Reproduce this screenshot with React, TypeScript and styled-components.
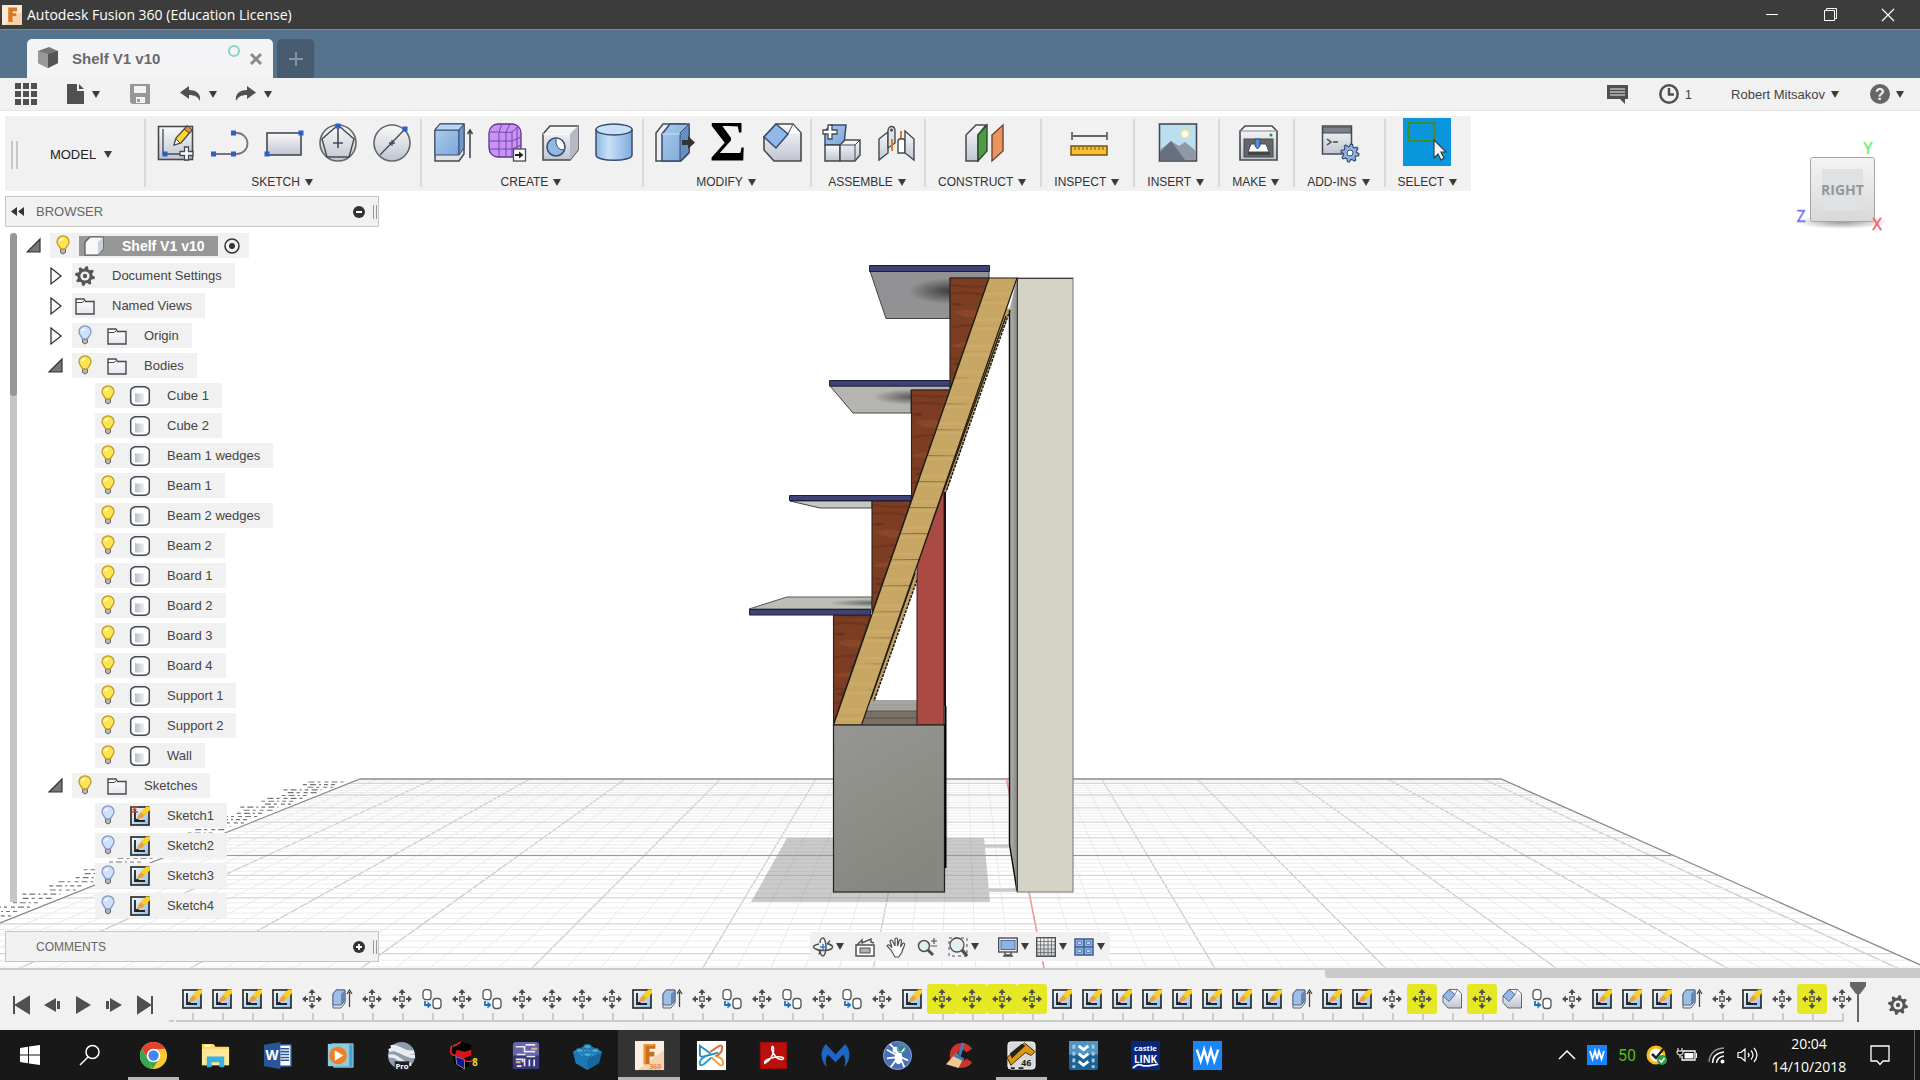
import React from 'react';
import styled, { createGlobalStyle, css } from 'styled-components';

const ui = `"Liberation Sans", Arial, sans-serif`;
const system = `"Open Sans", "Noto Sans", sans-serif`;

const Global = createGlobalStyle`
  * { box-sizing: border-box; }
  body { margin: 0; font-family: ${ui}; font-size: 13px; color: #444; background: #fff; }
  button { font: inherit; color: inherit; background: none; border: 0; padding: 0; margin: 0; display: flex; align-items: center; justify-content: center; cursor: pointer; }
  ul { list-style: none; margin: 0; padding: 0; }
  svg { display: block; flex: none; overflow: visible; }
`;

/* ---------- frame ---------- */

const Window = styled.div`
  display: flex;
  flex-direction: column;
  height: 100vh;
  overflow: hidden;
`;

const TitleBar = styled.header`
  display: flex;
  align-items: center;
  gap: 5px;
  height: 29px;
  padding: 0 3px 0 2px;
  background: #3c3c3c;
  color: #fff;
`;

const AppTitle = styled.h1`
  flex: 1;
  margin: 0;
  font: 400 14px/20px ${system};
`;

const WindowButton = styled.button`
  width: 58px;
  height: 29px;
`;

const TabBar = styled.div`
  display: flex;
  align-items: flex-end;
  gap: 4px;
  height: 49px;
  padding-left: 27px;
  background: #56738d;
  border-top: 1px solid #6e8aa2;
`;

const Tab = styled.div`
  display: flex;
  align-items: center;
  width: 246px;
  height: 39px;
  padding: 0 11px 0 11px;
  background: #f4f4f6;
  border-radius: 5px 5px 0 0;
`;

const TabName = styled.span`
  flex: 1;
  padding-left: 14px;
  font-weight: 700;
  font-size: 15px;
  line-height: 18px;
  color: #6a6a6a;
`;

const SyncRing = styled.i`
  width: 12px;
  height: 12px;
  margin: 0 10px 16px 0;
  border: 2px solid #8fd3c4;
  border-radius: 50%;
`;

const NewTab = styled.button`
  width: 37px;
  height: 39px;
  background: #465b70;
  border-radius: 5px 5px 0 0;
`;

const QuickBar = styled.div`
  display: flex;
  align-items: center;
  justify-content: space-between;
  height: 33px;
  padding: 0 16px 0 15px;
  background: #f1f1f1;
  border-bottom: 1px solid #e4e4e4;
`;

const QuickSet = styled.div`
  display: flex;
  align-items: center;
  gap: ${(p: { $gap: number }) => p.$gap}px;
`;

const QuickButton = styled.button<{ $loose?: boolean }>`
  gap: ${p => (p.$loose ? 8 : 6)}px;
  height: 24px;
`;

/* ---------- viewport ---------- */

const Viewport = styled.main`
  position: relative;
  display: flex;
  flex-direction: column;
  flex: 1;
  min-height: 0;
  padding: 5px 5px 6px;
  background: #fff;
`;

const SceneLayer = styled.div`
  position: absolute;
  inset: 0;
  overflow: hidden;
  svg { width: 100%; height: 100%; overflow: hidden; }
`;

const CubeLayer = styled.div`
  position: absolute;
  top: 24px;
  right: 30px;
`;

const Overlay = styled.div`
  position: relative;
  display: flex;
  flex-direction: column;
  align-items: flex-start;
  flex: 1;
  min-height: 0;
`;

const Ribbon = styled.div`
  display: flex;
  align-items: stretch;
  height: 75px;
  background: #f1f1f1;
`;

const Workspace = styled.button`
  gap: 8px;
  width: 139px;
  padding: 2px 26px 0 0;
  font-size: 13px;
  color: #222;
`;

const Grip = styled.i`
  width: 7px;
  height: 28px;
  margin: 0 24px 0 0;
  border: solid #c6c6c6;
  border-width: 0 2px;
`;

const Group = styled.section`
  position: relative;
  display: flex;
  flex-direction: column;
  align-items: center;
  justify-content: space-between;
  padding: 2px 3px 0;
  background: linear-gradient(#dadada, #dadada) left 3px / 2px 68px no-repeat;
`;

const Tools = styled.div`
  display: flex;
`;

const Tool = styled.button<{ $on?: boolean }>`
  width: ${p => (p.$on ? 48 : 54)}px;
  height: 48px;
  ${p => p.$on && css`background: #0a96dc;`}
`;

const GroupLabel = styled.button`
  gap: 5px;
  height: 18px;
  padding: 0 11px;
  font-size: 12px;
  line-height: 14px;
  color: #333;
  white-space: nowrap;
`;

const PanelBar = styled.div`
  display: flex;
  align-items: center;
  gap: 8px;
  width: 374px;
  height: 31px;
  padding: 0 1px 0 5px;
  background: #f1f1f1;
  border: 1px solid #c6c6c6;
`;

const PanelTitle = styled.h2`
  flex: 1;
  margin: 0;
  padding-left: ${(p: { $inset?: boolean }) => (p.$inset ? 25 : 4)}px;
  font-size: ${p => (p.$inset ? 12 : 13)}px;
  font-weight: 400;
  line-height: 16px;
  color: #666;
`;

const MiniGrip = styled.i`
  width: 4px;
  height: 14px;
  border: solid #999;
  border-width: 0 1px;
`;

const BrowserHead = styled.div`
  margin: 5px 0 6px;
`;

const BrowserBody = styled.div`
  display: flex;
  flex: 1;
  gap: 9px;
  min-height: 0;
  padding-left: 5px;
`;

const ScrollTrack = styled.div`
  width: 7px;
  height: 669px;
  background: #c6c6c8;
  border-radius: 4px 4px 0 0;
`;

const ScrollThumb = styled.div`
  height: 163px;
  background: #969696;
  border-radius: 4px;
`;

const Tree = styled.ul`
  display: flex;
  flex-direction: column;
  gap: 5px;
  overflow: hidden;
`;

const Row = styled.li<{ $level: number }>`
  display: flex;
  align-items: center;
  gap: 9px;
  height: 25px;
  padding-left: ${p => p.$level * 23 - 1}px;
`;

const Twisty = styled.button`
  width: 15px;
  height: 20px;
`;

const Pill = styled.div<{ $root?: boolean }>`
  display: flex;
  align-items: center;
  gap: ${p => (p.$root ? 6 : 12)}px;
  height: 25px;
  padding: 0 ${p => (p.$root ? 9 : 13)}px 0 3px;
  background: #f1f1f1;
`;

const Node = styled.button<{ $root?: boolean }>`
  gap: ${p => (p.$root ? 18 : 17)}px;
  line-height: 20px;
  white-space: nowrap;
  ${p => p.$root && css`
    padding: 0 13px 0 5px;
    font-weight: 700;
    font-size: 14px;
    color: #fff;
    background: #979797;
  `}
`;

const BottomRow = styled.div`
  display: grid;
  grid-template-columns: 1fr auto 1fr;
  align-items: center;
  width: 100%;
`;

const NavBar = styled.nav`
  display: flex;
  align-items: center;
  gap: 19px;
  height: 29px;
  padding: 0 5px 0 3px;
  background: #f1f1f1;
`;

const NavSet = styled.div<{ $tight?: boolean }>`
  display: flex;
  align-items: center;
  gap: ${p => (p.$tight ? 7 : 11)}px;
`;

const NavButton = styled.button`
  gap: 3px;
  height: 24px;
`;

/* ---------- timeline ---------- */

const Timeline = styled.footer`
  display: flex;
  height: 62px;
  background: #f1f1f1;
  border-top: 2px solid #cbcbcb;
`;

const Playback = styled.div`
  display: flex;
  align-items: center;
  gap: 11px;
  padding: 10px 0 0 11px;
`;

const PlayButton = styled.button`
  width: 20px;
  height: 24px;
`;

const TrackArea = styled.div`
  display: flex;
  flex-direction: column;
  flex: 1;
`;

const TrackScroll = styled.div`
  align-self: flex-end;
  width: 595px;
  height: 8px;
  background: #c9c9c9;
  border-radius: 0 0 0 4px;
`;

const Track = styled.div`
  display: flex;
  flex: 1;
  padding-left: 14px;
`;

const Dashes = styled.i`
  width: 8px;
  height: 2px;
  margin-top: 42px;
  background: repeating-linear-gradient(90deg, #cbcbcb 0 5px, transparent 5px 7px);
`;

const Steps = styled.ol`
  display: flex;
  margin: 0;
  padding: 6px 0 0;
  list-style: none;
`;

const Step = styled.li`
  width: 30px;
  height: 38px;
  background:
    linear-gradient(#cbcbcb, #cbcbcb) 15px 29px / 2px 8px no-repeat,
    linear-gradient(#cbcbcb, #cbcbcb) 0 36px / 100% 2px no-repeat;
  &:last-child { background-size: 2px 8px, 17px 2px; }
`;

const StepButton = styled.button<{ $hot?: boolean }>`
  width: 30px;
  height: 30px;
  border-radius: 3px;
  background: ${p => (p.$hot ? '#e5e823' : 'none')};
`;

const Marker = styled.div`
  margin: 4px 0 0 -7px;
`;

const SettingsButton = styled.button`
  width: 24px;
  height: 24px;
  margin: 15px 10px 0 auto;
`;

/* ---------- taskbar ---------- */

const Taskbar = styled.footer`
  display: flex;
  align-items: stretch;
  height: 50px;
  background: #181818;
  color: #fff;
  font-family: ${system};
`;

const SystemButton = styled.button`
  width: 60px;
`;

const Apps = styled.div`
  display: flex;
  flex: 1;
  padding-left: 2px;
`;

const AppButton = styled.button<{ $state?: 'open' | 'active' }>`
  position: relative;
  width: 62px;
  background: ${p => (p.$state === 'active' ? '#333' : 'none')};
  &::after {
    content: '';
    position: absolute;
    bottom: 0;
    left: ${p => (p.$state === 'active' ? 0 : 6)}px;
    right: ${p => (p.$state === 'active' ? 0 : 5)}px;
    height: ${p => (p.$state ? 3 : 0)}px;
    background: #b8b8b8;
  }
`;

const Tray = styled.div`
  display: flex;
  align-items: center;
  gap: 10px;
`;

const TrayButton = styled.button`
  width: 20px;
  height: 30px;
`;

const Clock = styled.button`
  flex-direction: column;
  width: 84px;
  font-size: 14px;
  line-height: 23px;
`;

const Notify = styled.button`
  width: 38px;
`;

const DesktopEdge = styled.i`
  width: 6px;
  height: 50px;
  margin-left: 5px;
  border-left: 1px solid #666;
`;

/* ---------- icons ---------- */

const O = '#454a52';
const B = '#3a4a70';

type SvgProps = { w?: number; h?: number; vb?: string; children: React.ReactNode };
const Svg = ({ w = 20, h = w, vb, children }: SvgProps) => (
  <svg width={w} height={h} viewBox={vb || `0 0 ${w} ${h}`} fill="none" aria-hidden="true">{children}</svg>
);

const Caret = () => <Svg w={8} h={7}><path d="M0 0h8L4 7z" fill="#3c3c3c" /></Svg>;
const Pip = ({ x, y }: { x: number; y: number }) => <rect x={x - 2.5} y={y - 2.5} width="5" height="5" fill="#2d5fc9" />;

const gearPath = (r: number, inner: number, teeth: number) => {
  let d = '';
  const n = teeth * 4;
  for (let i = 0; i < n; i++) {
    const a = ((i + 0.5) / n) * Math.PI * 2;
    const q = i % 4 < 2 ? r : inner;
    d += `${i ? 'L' : 'M'}${(Math.cos(a) * q).toFixed(2)} ${(Math.sin(a) * q).toFixed(2)}`;
  }
  return d + 'Z';
};
const Gear = () => (
  <Svg w={20} vb="-10 -10 20 20">
    <path d={gearPath(10, 7.4, 8)} fill="#555" />
    <circle r="4.6" fill="#f1f1f1" /><circle r="2.2" fill="#555" />
  </Svg>
);

const tools: Record<string, React.ReactNode> = {
  newSketch: <>
    <rect x="2.5" y="3.5" width="34" height="33" fill="url(#steel)" stroke={O} strokeWidth="1.6" />
    <path d="M7 6v25h27" stroke={O} strokeWidth="1.3" /><Pip x={9} y={31} />
    <path d="M18 22l2-7L31 3l5 4-11 13z" fill="#ffd530" stroke={O} strokeWidth="1.3" />
    <path d="M28 6l5 4 3-3-4-4z" fill="#e08a3c" stroke={O} /><path d="M18 22l2-6 4 4z" fill="#fff" stroke={O} />
    <path d="M28.500 24h4v4.500h4.500v4h-4.500v4.500h-4v-4.500h-4.500v-4h4.500z" fill="#fff" stroke={O} strokeWidth="1.300" />
  </>,
  line: <><path d="M4 31h23a10.500 10.500 0 0 0 0-21h-4" stroke="#777" strokeWidth="1.800" /><Pip x={3.5} y={31} /><Pip x={23.5} y={31} /><Pip x={23.5} y={10} /></>,
  rect: <><rect x="3" y="10" width="34" height="22" fill="url(#steel)" stroke={O} strokeWidth="1.600" /><Pip x={37} y={10} /><Pip x={3} y={31} /></>,
  polygon: <><circle cx="20" cy="20" r="18" fill="url(#steel)" stroke="#666" strokeWidth="1.600" /><path d="M20 2l16 14-5 18H9L4 16z" stroke={O} strokeWidth="1.400" /><path d="M20 2v23M15 20h10" stroke={O} strokeWidth="1.600" /><Pip x={20} y={3} /></>,
  circle: <><circle cx="20" cy="20" r="18" fill="url(#steel)" stroke="#666" strokeWidth="1.600" /><path d="M8 32L33 6M17 20h6M20 17v6" stroke={O} strokeWidth="1.300" /><Pip x={33} y={6} /></>,
  extrude: <>
    <path d="M3 7l5-6h24v30l-5 7H3z" fill="#dfe3e8" stroke={O} strokeWidth="1.500" />
    <path d="M3 7h24v25H3z" fill="url(#blue)" stroke={B} /><path d="M3 7l5-6h24l-5 6z" fill="#b9d6f2" stroke={B} /><path d="M27 7l5-6v24l-5 7z" fill="#7098c8" stroke={B} />
    <path d="M38 35V8M35.500 11l2.500-4 2.500 4" stroke={O} strokeWidth="1.600" />
  </>,
  form: <>
    <rect x="3" y="1" width="32" height="33" rx="9" fill="#c793f4" stroke="#60318f" strokeWidth="1.300" />
    <path d="M12 9H3M13 9q8 1 13 0M4 18h22M4 26h22M13 9v24M20 9v24M26 9v24M13 9l3-8M20 9l4-8M26 9l6-5M26 18l9-4M26 26l9-4M31 4v26" stroke="#7544a8" strokeWidth="1" />
    <rect x="27.500" y="26" width="12" height="12" fill="#fff" stroke={O} strokeWidth="1.300" /><path d="M29 32h5" stroke="#222" strokeWidth="2" /><path d="M33 28.500l4.500 3.500-4.500 3.500z" fill="#222" />
  </>,
  hole: <>
    <path d="M3 11l7-8h28v24l-8 10H3z" fill="url(#steel)" stroke={O} strokeWidth="1.500" /><path d="M30 11l8-8v24l-8 10z" fill="#b5bac2" stroke="none" /><path d="M3 11h27" stroke="#fff" />
    <circle cx="16" cy="24" r="9" fill="#8fb9e4" stroke={B} strokeWidth="1.500" /><path d="M16 15a9 9 0 0 1 8 12q-9 0-8-12z" fill="#fff" stroke={B} />
  </>,
  cylinder: <><path d="M2 6v26c0 7 36 7 36 0V6" fill="url(#tube)" stroke={B} strokeWidth="1.500" /><ellipse cx="20" cy="6.500" rx="18" ry="5.500" fill="#c9e1f5" stroke={B} strokeWidth="1.500" /></>,
  press: <>
    <path d="M2 10l7-9h22l4 4v25l-8 8H2z" fill="#eceef2" stroke={O} strokeWidth="1.500" /><path d="M8 11l8-10h19v28l-9 9H8z" fill="url(#blue)" stroke={B} strokeWidth="1.500" /><path d="M26 10l9-9v28l-9 9z" fill="#648fc3" stroke={B} /><path d="M8 11h18" stroke="#c9e1f5" />
    <path d="M28 17h6v-4l7 6.500-7 6.500v-4h-6z" fill="#333" />
  </>,
  sigma: <text x="20" y="38" textAnchor="middle" fontFamily="Liberation Serif, serif" fontWeight="700" fontSize="56" fill="#000">Σ</text>,
  fillet: <><path d="M2 14L14 1h17l8 9v28H12L2 27z" fill="url(#steel)" stroke={O} strokeWidth="1.600" /><path d="M2 14L14 1l12 10-12 14z" fill="#8fb9e8" stroke={B} strokeWidth="1.500" /><path d="M26 11l5-10 8 9" fill="#fff" stroke={O} /></>,
  component: <>
    <path d="M3 8l6-6h15l-2 20H3z" fill="url(#blue)" stroke={B} strokeWidth="1.500" /><path d="M3 22h15v16H3z" fill="url(#steel)" stroke={O} strokeWidth="1.500" />
    <path d="M18 22l5-5h15v15l-5 6H18z" fill="url(#steel)" stroke={O} strokeWidth="1.500" /><path d="M33 22l5-5M33 22v16M18 22h15" stroke={O} />
    <path d="M6 2h4v5h5v4h-5v5H6v-5H1V7h5z" fill="#fff" stroke={O} strokeWidth="1.300" />
  </>,
  joint: <>
    <path d="M3 16l9-7v21l-9 7z" fill="url(#steel)" stroke={O} strokeWidth="1.400" /><path d="M12 8c0-6 7-6 7 0v12l-7 5z" fill="#dfe2e8" stroke={O} strokeWidth="1.400" /><circle cx="15.500" cy="7" r="1.500" fill={O} />
    <path d="M16 16v12M25 8v10" stroke="#e87722" strokeWidth="2" /><path d="M22 18c0-3 7-3 7 0v12h-7z" fill="#fff" stroke={O} strokeWidth="1.400" /><path d="M29 8l9 8v21l-9-7z" fill="url(#steel)" stroke={O} strokeWidth="1.400" />
  </>,
  construct: <><path d="M2 12l10-10h10l-8 10v26H2z" fill="url(#steel)" stroke={O} strokeWidth="1.500" /><path d="M14 12l9-10v26l-9 10z" fill="#4f9a45" stroke="#285028" strokeWidth="1.400" /><path d="M28 12L39 2v26L28 38z" fill="#ec935e" stroke="#70452d" strokeWidth="1.400" /></>,
  inspect: <><path d="M3 9v8M38 9v8M3 13h35" stroke="#666" strokeWidth="1.800" /><rect x="2" y="23" width="36" height="9" fill="#f5c12f" stroke="#765312" strokeWidth="1.500" /><path d="M6 24v3M10 24v3M14 24v3M18 24v3M22 24v3M26 24v3M30 24v3M34 24v3" stroke="#765312" /></>,
  insert: <><rect x="1.500" y="1" width="37" height="37" fill="#bcdff0" stroke={O} strokeWidth="1.600" /><path d="M2 27l11-9 8 5 6-4 11 9v9H2z" fill="#8f98a5" /><path d="M2 29l11-11 14 19H2z" fill="#66707e" /><circle cx="27" cy="11" r="4.500" fill="#ffe680" /><circle cx="27" cy="11" r="3" fill="#fff" /></>,
  make: <><path d="M2 8l5-5h27l5 5v29H2z" fill="url(#steel)" stroke={O} strokeWidth="1.600" /><path d="M2 8h37" stroke="#888" /><circle cx="33" cy="12" r="1.500" fill="#239320" /><rect x="6" y="16" width="29" height="18" fill="#666" stroke={O} /><path d="M10 29l3-8h15l3 8z" fill="#fff" stroke={O} /><path d="M17 16h5v7l-2.500 3-2.500-3z" fill="#4b91dc" stroke={B} /><rect x="10" y="29" width="22" height="3" fill="#444" /></>,
  addins: <>
    <rect x="2.500" y="3" width="29" height="28" fill="url(#steel)" stroke={O} strokeWidth="1.500" /><rect x="3" y="4" width="28" height="6" fill="#7b828d" stroke={O} /><path d="M7 16l4 3-4 3M13 19h5" stroke={O} strokeWidth="1.500" />
    <g transform="translate(30 30)"><path d={gearPath(9, 6.600, 8)} fill="#93b2dc" stroke="#354d76" strokeWidth="1.200" /><circle r="3" fill="#fff" stroke="#354d76" /></g>
  </>,
};
const ToolIcon = ({ name }: { name: string }) => <Svg w={46} vb="-5 -4 46 46">{tools[name]}</Svg>;

const SelectIcon = () => (
  <Svg w={48}><rect x="5.500" y="5" width="26" height="18" stroke="#458b22" strokeWidth="1.800" /><path d="M31 22v18l4-4 3 6 3-2-3-6h5z" fill="#f4f6f8" stroke="#33424f" strokeWidth="1.200" /></Svg>
);

const Bulb = ({ on }: { on: boolean }) => (
  <Svg><path d="M7.500 13v3.500q2.500 3 5 0V13z" fill="#b8b8b8" stroke="#666" /><path d="M7.500 13c0-2-3.500-3.500-3.500-7.200a6 6 0 0 1 12 0C16 9.500 12.500 11 12.500 13z" fill={on ? '#fbe655' : '#cfe0fb'} stroke={on ? '#c39a1e' : '#8397c4'} strokeWidth="1.300" /><path d="M7 5q1-2 3-2" stroke="#fff" strokeWidth="1.500" /></Svg>
);
const Folder = () => <Svg><path d="M1 3h8l1.500 2.500H19V18H1z" fill="url(#pale)" stroke={O} strokeWidth="1.400" /><path d="M1 6.500h6l2-1.500" stroke={O} /></Svg>;
const BodyIcon = () => <Svg><path d="M5 .7h10q4.300 1.500 4.300 4v10.600q0 3-4.300 4H5q-4.300-1-4.300-4V4.700q0-2.500 4.300-4z" fill="#fff" stroke="#434956" strokeWidth="1.500" /><path d="M5 7q5 1 9 0v9q-5 1-9 0z" fill="url(#tubeGrey)" /></Svg>;
const CubeIcon = () => <Svg><path d="M1 7q0-1 1-2l4-4h13v12l-5 6H1z" fill="#f7f8fa" stroke="#555" strokeWidth="1.200" /><path d="M14 6l5-5v12l-5 6z" fill="#ccd0d8" /></Svg>;
const SketchIcon = ({ pin }: { pin?: boolean }) => (
  <Svg>
    <rect x="1" y="1" width="18" height="18" fill="url(#sketch)" stroke="#222" strokeWidth="1.600" />
    <path d="M5 4v11h10" stroke="#222" strokeWidth="1.800" /><path d="M6 14.500l2.500-1" stroke="#222" strokeWidth="2" />
    <path d="M7 13l1.500-4L16 1l4 3-8 8z" fill="#ffcb14" /><path d="M7 13l1.500-4L14 3l3 3.500-5 5.500z" fill="#e9a04a" /><path d="M11 6l5.500-5.500H20V4l-6 5z" fill="#ffd21a" />
    {pin && <path d="M1 1h7M4.500 1v4M1 6h7M2.500 3.500h4" stroke="#b5482f" strokeWidth="1.600" />}
  </Svg>
);
const MoveIcon = () => (
  <Svg><rect x="7.800" y="7.800" width="4.400" height="4.400" stroke="#555" strokeWidth="1.300" /><path d="M10 0l3.500 4h-7zM10 20l3.500-4h-7zM0 10l4-3.500v7zM20 10l-4-3.500v7z" fill="#4f4f4f" /><path d="M10 3v3M10 14v3M3 10h3M14 10h3" stroke="#4f4f4f" strokeWidth="1.800" /></Svg>
);
const ExtrudeSmall = () => <Svg><path d="M1 5l3-4h9v13l-4 5H1z" fill="#dfe5ee" stroke="#56657e" /><path d="M1 5l3-4h9v11l-4 4H1z" fill="#9fc0e6" stroke="#56657e" /><path d="M9 5v11l4-4V1z" fill="#6688b0" /><path d="M17.500 18V3M15 5l2.500-4L20 5" stroke="#444" strokeWidth="1.300" /></Svg>;
const CopyIcon = () => <Svg><rect x="1" y="0.700" width="8" height="10" rx="3" fill="#fff" stroke="#555" strokeWidth="1.300" /><rect x="11" y="9.500" width="8" height="10" rx="3" fill="#fff" stroke="#555" strokeWidth="1.300" /><path d="M3 12v4h4" stroke="#1972c8" strokeWidth="1.800" /><path d="M5.500 12.500L9.500 16l-4 3.500z" fill="#1972c8" /></Svg>;
const FilletSmall = () => <Svg w={20} h={20} vb="0 0 40 40">{tools.fillet}</Svg>;

/* ---------- scene ---------- */

const VX = 959;
const VY = 540;

const GridFloor = () => {
  const items: React.ReactNode[] = [];
  for (let i = -80; i <= 80; i++) {
    const x = 1006.5 + i * 19.06;
    const k = (980 - VY) / 239;
    items.push(<line key={'v' + i} x1={x} y1={779} x2={VX + (x - VX) * k} y2={980} stroke={i % 5 ? '#e9e9e9' : '#cbcbcb'} strokeWidth={i % 5 ? 1 : 1.3} />);
  }
  for (let j = -28; j <= 27; j++) {
    const y = VY + 1 / (0.0031696 + j * 0.0000376);
    items.push(<line key={'h' + j} x1={-10} y1={y} x2={1940} y2={y} stroke={j % 5 ? '#ececec' : '#d6d6d6'} strokeWidth={j % 5 ? 1 : 1.3} />);
  }
  return <g clipPath="url(#floor)">{items}</g>;
};

const ScaleMarks = () => {
  const marks: React.ReactNode[] = [];
  let y = 782;
  for (let k = 0; y < 920; k++) {
    const end = 360 - (y - 779) * 2.506 - 6 - (k % 2) * 5;
    const len = 38 - (k % 3) * 6;
    marks.push(<line key={k} x1={end - len} y1={y} x2={end} y2={y} stroke="#777" strokeWidth="1.200" strokeDasharray={k % 2 ? '4 3 6 3 2 3' : '6 3 3 4 4 3'} />);
    y += 2.6 + k * 0.05;
  }
  return <g>{marks}</g>;
};

const edge = { stroke: '#26221f', strokeWidth: 1.1 };

const Scene = () => (
  <svg viewBox="0 111 1920 857" preserveAspectRatio="xMidYMid slice" role="img" aria-label="Shelf model, right view">
    <defs>
      <clipPath id="floor"><path d="M360 779H1501L1932 970V1000H-190z" /></clipPath>
      <linearGradient id="steel" x1="0" y1="0" x2="0" y2="1"><stop offset="0" stopColor="#fafafb" /><stop offset="1" stopColor="#bfc5d0" /></linearGradient>
      <linearGradient id="pale" x1="0" y1="0" x2="0" y2="1"><stop offset="0" stopColor="#fff" /><stop offset="1" stopColor="#e6e7ec" /></linearGradient>
      <linearGradient id="blue" x1="0" y1="0" x2="1" y2="1"><stop offset="0" stopColor="#a9cbed" /><stop offset="1" stopColor="#7ba7d8" /></linearGradient>
      <linearGradient id="tube"><stop offset="0" stopColor="#8db7e2" /><stop offset=".35" stopColor="#c7e0f7" /><stop offset="1" stopColor="#7fabdc" /></linearGradient>
      <linearGradient id="tubeGrey"><stop offset="0" stopColor="#b9bec8" /><stop offset="1" stopColor="#eff0f3" /></linearGradient>
      <linearGradient id="sketch" x1="0" y1="0" x2="1" y2="1"><stop offset="0" stopColor="#fff" /><stop offset="1" stopColor="#8dbbe8" /></linearGradient>
      <linearGradient id="block" x1="0" y1="0" x2=".4" y2="1"><stop offset="0" stopColor="#969792" /><stop offset="1" stopColor="#868780" /></linearGradient>
      <radialGradient id="dark"><stop offset="0" stopColor="#2e2e2e" stopOpacity=".85" /><stop offset="1" stopColor="#2e2e2e" stopOpacity="0" /></radialGradient>
      <linearGradient id="side" x1="0" y1="0" x2="1" y2="0"><stop offset="0" stopColor="#b3b4ae" /><stop offset="1" stopColor="#8a8b86" /></linearGradient>
      <pattern id="cherry" width="39" height="110" patternUnits="userSpaceOnUse" x="833" y="60">
        <rect width="39" height="110" fill="#7d3d22" />
        <path d="M0 5q20 3 39 1M0 14q20-3 39 2M0 48q12-4 39-2M0 78q20 4 39 1M0 93q20-4 39 1" stroke="#5d2a16" strokeWidth="2.500" fill="none" opacity=".4" />
        <path d="M4 32q16-5 32 2-18 8-32-2M0 66q14-6 26-3-10 7-26 3M10 103q12-5 24 0-12 4-24 0" fill="#96502e" opacity=".5" />
        <path d="M0 24q8-3 13 0-6 4-13 0M14 57q9-3 20 0-10 3-20 0M2 84q10-4 16 0-8 4-16 0" fill="#4d2010" opacity=".4" />
      </pattern>
      <pattern id="pine" width="170" height="26" patternUnits="userSpaceOnUse" x="833">
        <rect width="170" height="26" fill="#c8a765" />
        <path d="M0 4h170M0 13q85 3 170 0M0 21h170" stroke="#bd9a57" opacity=".35" /><path d="M0 8h170M0 17h170" stroke="#d6b676" opacity=".5" />
      </pattern>
      <linearGradient id="face" x1="0" y1="0" x2="0" y2="1"><stop offset="0" stopColor="#f4f4f4" /><stop offset="1" stopColor="#d8d8d8" /></linearGradient>
      <radialGradient id="ground"><stop offset="0" stopColor="#999" /><stop offset="1" stopColor="#999" stopOpacity="0" /></radialGradient>
    </defs>

    <GridFloor />
    <ScaleMarks />
    <path d="M-10 927L360 779H1501L1932 970" fill="none" stroke="#8c8c8c" strokeWidth="1.300" />
    <path d="M787 838H984l6 64H751z" fill="#777" opacity=".38" />
    <path d="M984 846h26M987 890h30" stroke="#c9c9c9" strokeWidth="3.500" />
    <path d="M169 855.500H1671" stroke="#8f8fec" strokeWidth="1.200" />
    <path d="M1006.500 779L1044 968" stroke="#f59a9a" strokeWidth="1.500" />

    <path d="M1017 278L1009.500 310V844L1017 891z" fill="url(#side)" />
    <path d="M1009.500 310V844L1017 891" fill="none" stroke="#111" strokeWidth="1.500" />
    <rect x="1017" y="278" width="56" height="614" fill="#d5d2c6" stroke="#777772" />
    <path d="M1017.500 278V892M1017 278.500h56" stroke="#3c3b38" />

    <path d="M866 700h51v11h-51z" fill="#a5a69f" /><path d="M860 711h57v14h-57z" fill="#7b7061" />
    <path d="M866 705h51M866 708h51" stroke="#999a94" /><path d="M862 711h55M862 718h55" stroke="#5b5248" />

    <path d="M870 271l16 47.500h64V278h39v-7z" fill="#929294" stroke="#444" />
    <ellipse cx="950" cy="291" rx="42" ry="13" fill="url(#dark)" />
    <path d="M830 386l23 27h58v-23h39v-4z" fill="#b4b5b0" stroke="#444" />
    <ellipse cx="911" cy="397" rx="38" ry="8" fill="url(#dark)" opacity=".8" />
    <path d="M790 501l30 7h52v-7z" fill="#c6c7c0" stroke="#444" />
    <path d="M749 609l38-12h85v12z" fill="#bdbeb8" stroke="#555" />
    <ellipse cx="870" cy="603" rx="42" ry="4" fill="url(#dark)" opacity=".7" />

    <path d="M950 278h39L950 389z" fill="url(#cherry)" {...edge} />
    <path d="M911.500 390H950L911.500 500z" fill="url(#cherry)" {...edge} />
    <path d="M872 501h39l-39 112z" fill="url(#cherry)" {...edge} />
    <path d="M833.500 615H871l-37.500 109z" fill="url(#cherry)" {...edge} />

    <path d="M869.500 265.500h120v6h-120zM829.500 380.500h120.500v5.500H829.500zM789.500 495.500h121.500v5H789.500zM749.500 609.500h121v5.500h-121z" fill="#3f4273" stroke="#1c1e3c" />

    <path d="M1010 308L946 492l-3-3 62-180zM917 578L874 701h-5l46-134z" fill="#c3a05c" />
    <path d="M1010 310L946 492M917 580L874 701" stroke="#1d1a15" strokeWidth="1.500" strokeDasharray="3 1" />
    <path d="M1006 316L944 490M915 573L871 699" stroke="#1d1a15" strokeWidth="1.300" />
    <path d="M917 566l27-76V725h-27z" fill="#a94b44" stroke="#3a1916" />
    <path d="M989 278h28L861.500 725h-28z" fill="url(#pine)" stroke="#1d1a15" strokeWidth="1.200" />
    <path d="M945 492V706" stroke="#23110f" strokeWidth="2" />
    <rect x="833.500" y="725" width="111" height="167" fill="url(#block)" stroke="#222" strokeWidth="1.200" />
    <path d="M945.500 706V868" stroke="#000" strokeWidth="2" />
  </svg>
);

const ViewCube = () => (
  <Svg w={96} h={100}>
    <ellipse cx="48" cy="87" rx="46" ry="7" fill="url(#ground)" />
    <rect x="16.500" y="22.500" width="64" height="64" rx="2" fill="url(#face)" stroke="#a6a6a6" />
    <rect x="28" y="34" width="41" height="41" fill="#dfe1e4" />
    <g fontFamily="Open Sans, sans-serif" textAnchor="middle">
      <text x="48.500" y="60" fontSize="14" fontWeight="700" fill="#94989c">RIGHT</text>
      <text x="74" y="19" fontSize="16" fill="#6df07a" stroke="#6df07a" strokeWidth=".5">Y</text>
      <text x="7" y="87" fontSize="16" fill="#7a7af2" stroke="#7a7af2" strokeWidth=".5">Z</text>
      <text x="83" y="95" fontSize="16" fill="#f26464" stroke="#f26464" strokeWidth=".5">X</text>
    </g>
  </Svg>
);

/* ---------- data ---------- */

const ribbon: { label: string; icons: string[] }[] = [
  { label: 'SKETCH', icons: ['newSketch', 'line', 'rect', 'polygon', 'circle'] },
  { label: 'CREATE', icons: ['extrude', 'form', 'hole', 'cylinder'] },
  { label: 'MODIFY', icons: ['press', 'sigma', 'fillet'] },
  { label: 'ASSEMBLE', icons: ['component', 'joint'] },
  { label: 'CONSTRUCT', icons: ['construct'] },
  { label: 'INSPECT', icons: ['inspect'] },
  { label: 'INSERT', icons: ['insert'] },
  { label: 'MAKE', icons: ['make'] },
  { label: 'ADD-INS', icons: ['addins'] },
  { label: 'SELECT', icons: ['select'] },
];

type TreeRow = { name: string; level: number; open?: boolean; bulb?: boolean; icon: React.ReactNode; root?: boolean };
const body = (name: string): TreeRow => ({ name, level: 2, bulb: true, icon: <BodyIcon /> });
const sketch = (name: string, pin = false): TreeRow => ({ name, level: 2, bulb: false, icon: <SketchIcon pin={pin} /> });
const rows: TreeRow[] = [
  { name: 'Shelf V1 v10', level: 0, open: true, bulb: true, icon: <CubeIcon />, root: true },
  { name: 'Document Settings', level: 1, open: false, icon: <Gear /> },
  { name: 'Named Views', level: 1, open: false, icon: <Folder /> },
  { name: 'Origin', level: 1, open: false, bulb: false, icon: <Folder /> },
  { name: 'Bodies', level: 1, open: true, bulb: true, icon: <Folder /> },
  ...['Cube 1', 'Cube 2', 'Beam 1 wedges', 'Beam 1', 'Beam 2 wedges', 'Beam 2', 'Board 1', 'Board 2', 'Board 3', 'Board 4', 'Support 1', 'Support 2', 'Wall'].map(body),
  { name: 'Sketches', level: 1, open: true, bulb: true, icon: <Folder /> },
  sketch('Sketch1', true), sketch('Sketch2'), sketch('Sketch3'), sketch('Sketch4'),
];

const history = 'SSSSMEMMCMCMMMMSEMCMCMCMSYYYYSSSSSSSSESSMYFYFCMSSSEMSMYM'.split('');
const stepIcon: Record<string, [string, React.ReactNode]> = {
  S: ['Sketch', <SketchIcon />],
  M: ['Move', <MoveIcon />],
  Y: ['Move, needs attention', <MoveIcon />],
  E: ['Extrude', <ExtrudeSmall />],
  C: ['Copy', <CopyIcon />],
  F: ['Fillet', <FilletSmall />],
};

const G = '#505050';
const playback: [string, React.ReactNode][] = [
  ['Go to start', <path d="M3 3v18M18 4v16L5 12z" fill={G} stroke={G} strokeWidth="2" />],
  ['Step back', <path d="M14 5v14L2 12zM15 8h3v8h-3z" fill={G} />],
  ['Play', <path d="M3 3l15 9-15 9z" fill={G} />],
  ['Step forward', <path d="M6 5v14l12-7zM2 8h3v8H2z" fill={G} />],
  ['Go to end', <path d="M17 3v18M3 4v16l12-8z" fill={G} stroke={G} strokeWidth="2" />],
];

type NavItem = { name: string; caret?: boolean; icon: React.ReactNode };
const cameraTools: NavItem[] = [
  { name: 'Orbit', caret: true, icon: <><path d="M7 6c0-3 1.500-5 3-5s3 4 3 9-1.500 9-3 9-2.500-2-3-5" stroke={G} strokeWidth="1.500" /><path d="M6 7c-3 .6-5.500 1.500-5.500 3s4 3.500 9.500 3.500 9.500-1.500 9.500-3.500-3-3-5-3.300" stroke={G} strokeWidth="1.500" /><path d="M10 7v6M7 10h6" stroke="#2b7fd6" strokeWidth="1.500" /><path d="M17 3.500l-2.500 3 3.500 2M5 13l2 1.500-1 3" stroke={G} strokeWidth="1.300" /></> },
  { name: 'Look at', icon: <><rect x="1" y="8" width="18" height="11" fill="#fff" stroke={G} strokeWidth="1.500" /><rect x="5" y="11" width="10" height="5" fill="#aab1bd" stroke={G} /><path d="M2 8l5-5v3l9-4v3l3 1" stroke={G} strokeWidth="1.400" /></> },
  { name: 'Pan', icon: <path d="M5 13L1 9q1-2 3-.5l2 2L4 4q1-2 2.500 0L9 9V2q1.500-2 2.500 0v7l2-6q2-1 2 1l-1 6 2.500-4q2 0 1.500 2l-3 8-3 4H9z" fill="#fff" stroke={G} strokeWidth="1.200" /> },
  { name: 'Zoom', icon: <><circle cx="7" cy="9" r="5.500" fill="#e3eef2" stroke={G} strokeWidth="1.500" /><path d="M11 13l5 5" stroke={G} strokeWidth="3" /><path d="M14 4h6M17 1v6M14 9h6" stroke={G} strokeWidth="1.200" /></> },
  { name: 'Zoom window', caret: true, icon: <><rect x="1" y="1" width="18" height="18" stroke={G} strokeDasharray="3 3" /><circle cx="9" cy="8" r="7" fill="#e3eef2" stroke={G} strokeWidth="1.300" /><path d="M14 13l5 6" stroke={G} strokeWidth="3.500" /></> },
];
const displayTools: NavItem[] = [
  { name: 'Display settings', caret: true, icon: <><rect x="0.700" y="1" width="18.600" height="14" fill="#eee" stroke={G} strokeWidth="1.400" /><rect x="3" y="3.500" width="14" height="9" fill="#8db4e2" stroke="#4a6da5" /><path d="M7 15v3h6v-3M5 19h10" stroke={G} strokeWidth="1.500" /></> },
  { name: 'Grid settings', caret: true, icon: <><rect x="0.700" y="0.700" width="18.600" height="18.600" fill="url(#steel)" stroke={G} strokeWidth="1.400" /><path d="M4.500 1v18M8 1v18M12 1v18M15.500 1v18M1 4.500h18M1 8h18M1 12h18M1 15.500h18" stroke="#666" strokeWidth=".8" /></> },
  { name: 'Viewports', caret: true, icon: <><path d="M1 2h18v16H1zM10 2v16M1 10h18" fill="#8db4e2" stroke="#3d5c90" strokeWidth="1.500" /><path d="M3.500 4.500h4v3h-4zM12.500 4.500h4v3h-4zM3.500 12.500h4v3h-4zM12.500 12.500h4v3h-4z" fill="#b9d2ef" stroke="#5578ad" strokeWidth=".8" /></> },
];
const NavTool = ({ item }: { item: NavItem }) => (
  <NavButton aria-label={item.name}><Svg w={20}>{item.icon}</Svg>{item.caret && <Caret />}</NavButton>
);

const T = (p: { x: number; y: number; s: number; c?: string; children: string }) => (
  <text x={p.x} y={p.y} fontSize={p.s} fontWeight="700" textAnchor="middle" fill={p.c || '#fff'} fontFamily="Open Sans, sans-serif">{p.children}</text>
);

const apps: { name: string; state?: 'open' | 'active'; icon: React.ReactNode }[] = [
  { name: 'Chrome', state: 'open', icon: <><circle cx="16" cy="16" r="14" fill="#fcc934" /><path d="M3.900 9l6.100 10.500L14.500 30A14 14 0 0 1 3.900 9z" fill="#34a853" /><path d="M10 19.500L15 30l6-9z" fill="#34a853" /><path d="M3.900 9A14 14 0 0 1 28.100 9L16 9.500 10 19z" fill="#e34133" /><circle cx="16" cy="16" r="7" fill="#fff" /><circle cx="16" cy="16" r="5.300" fill="#4285f4" /></> },
  { name: 'File Explorer', icon: <><path d="M2 4h12l2 3h14v19H2z" fill="#ffd75e" /><path d="M2 9h28v17H2z" fill="#ffe79a" /><path d="M7 28V17h18v11h-5v-5h-8v5z" fill="#38b0e8" /><path d="M5 5h6v2H5z" fill="#fff" /></> },
  { name: 'Word', icon: <><rect x="15" y="5" width="15" height="22" fill="#fff" stroke="#2a5699" strokeWidth="1.500" /><path d="M19 9h9M19 12h9M19 15h9M19 18h9M19 21h9" stroke="#2a5699" strokeWidth="1.600" /><path d="M2 5l17-3v28L2 27z" fill="#2a5699" /><T x={10.5} y={21} s={14}>W</T></> },
  { name: 'Media Player', icon: <><path d="M8 4h22v24H10z" fill="#4f9fc0" stroke="#9ad4e8" /><rect x="4" y="4" width="22" height="23" fill="#8ccbe2" /><circle cx="14.500" cy="16" r="9" fill="#f57c1f" /><path d="M11 10.500l9 5.500-9 5.500z" fill="#fff" /></> },
  { name: 'Google Earth Pro', icon: <><circle cx="16" cy="16" r="14" fill="#8f9cab" /><path d="M3 11C12 6 18 18 30 17M5 7c8-3 14 9 24 5M3 17c9-3 13 9 23 8" stroke="#e9edf2" strokeWidth="3.500" /><rect x="9" y="22" width="15" height="9" fill="#222" /><T x={16.5} y={30} s={8}>Pro</T></> },
  { name: 'Circuit Tool', icon: <><path d="M5 9l8-7 11 3-2 21-9 5-7-8z" fill="#000" /><path d="M9 10l8 2 7-2v6l-8 3-9-3z" fill="#e10f16" /><path d="M8 17l9 3v10l-8-5z" fill="#14148e" stroke="#ddd" strokeWidth=".6" /><path d="M4 6q-4 10 4 10M13 2q-5 4-8 4M16 21q8 3 12-1" stroke="#f12727" strokeWidth="1.500" /><T x={28} y={27} s={10} c="#e7dd22">8</T></> },
  { name: 'Circuit Designer', icon: <><rect x="3" y="2" width="27" height="28" rx="3" fill="#6565ab" /><path d="M3 16h27v14H3z" fill="#38387d" /><path d="M6 7h9v5h11M16 5h10M7 15h9M17 17h9M6 20h7v3M15 19v8M20 20v7M25 20v7M7 27h5" stroke="#e8e8f7" strokeWidth="1.700" /><path d="M6 23h5M22 9h6" stroke="#e7b974" strokeWidth="2" /></> },
  { name: 'LEGO Designer', icon: <><path d="M1 12L16 5l15 7-3 12-12 7L4 24z" fill="#16679c" /><path d="M1 12L16 5l15 7-15 7z" fill="#2b91c9" /><path d="M16 19v12L4 24 1 12z" fill="#1d79b3" /><g fill="#3fa4da" stroke="#14608f"><ellipse cx="16" cy="7" rx="4" ry="2.500" /><ellipse cx="8" cy="11" rx="4" ry="2.500" /><ellipse cx="24" cy="11" rx="4" ry="2.500" /><ellipse cx="16" cy="15" rx="4" ry="2.500" /></g></> },
  { name: 'Fusion 360', state: 'active', icon: <><rect x="1" y="1" width="30" height="30" fill="#fbeee0" /><path d="M4 31L31 10v21z" fill="#f6d3b0" /><path d="M10 25V4h12v5h-6v3h5v5h-5v8z" fill="#c8701e" /><path d="M10 4h12l-2 2h-8v19h-2z" fill="#f09a3d" /><T x={22} y={30} s={7} c="#e38a3e">360</T></> },
  { name: 'Viewer', icon: <><rect x="1" y="1" width="30" height="30" fill="#fff" /><path d="M15 14L4 6v9q0 3 4 2l15-4" stroke="#2390b5" strokeWidth="2" /><path d="M15 12l9-6q3-1 3 2 0 6-7 9" stroke="#e1662f" strokeWidth="2" /><path d="M10 17q-7 3-6 8 1 2 4 0l8-7" stroke="#2a9fd0" strokeWidth="2" /><path d="M16 18l9 8q3 1 3-2 0-6-7-7" stroke="#eea13a" strokeWidth="2" /></> },
  { name: 'Adobe Reader', icon: <><rect x="2" y="2" width="28" height="28" fill="#b90f0f" stroke="#700" /><path d="M7 24c6-3 10-10 9-16-1-3-3 0-1 4s6 9 10 8-1-4-9-2-10 4-9 6z" stroke="#fff" strokeWidth="1.600" /></> },
  { name: 'Malwarebytes', icon: <path d="M7 28C0 21 0 10 6 4l10 11L26 4c6 6 6 17-1 24 2-6 1-10-1-13l-8 8-8-8c-2 3-3 7-1 13z" fill="#1d66c4" /> },
  { name: 'Spider Scan', icon: <><circle cx="16" cy="16" r="14.500" fill="#496fb6" stroke="#8aa6d8" /><ellipse cx="17" cy="18" rx="4" ry="7" fill="#fff" /><circle cx="14" cy="10" r="3" fill="#fff" /><path d="M14 15L5 10M14 18l-9 1M15 20l-6 8M19 14l5-6M20 18l7 3M20 21l3 7M12 8L8 4" stroke="#fff" strokeWidth="1.800" /><circle cx="20" cy="9" r="4" stroke="#3faa72" strokeWidth="1.500" /></> },
  { name: 'CCleaner', icon: <><path d="M29 9C23-1 6 2 6 16s17 17 23 7l-6-4c-3 5-9 3-9-3s6-8 9-3z" fill="#c9352c" /><path d="M16 16L20 3" stroke="#3e7cc0" strokeWidth="3" /><path d="M12 14l8 5-5 10L2 25z" fill="#f1c690" /><path d="M11 14l10 5-1 3-10-5z" fill="#3e7cc0" /></> },
  { name: 'Measure', state: 'open', icon: <><rect x="2" y="2" width="28" height="28" rx="3" fill="#d9d9d7" stroke="#fff" /><path d="M1 18L19 3l11 9-4 4-6-3L5 26z" fill="#d99714" stroke="#3c2b08" /><path d="M4 14L16 4l4 2L6 19z" fill="#222" /><T x={21} y={27} s={9} c="#222">46</T><path d="M5 29h4M13 29h5" stroke="#222" strokeWidth="2" /></> },
  { name: 'Video Downloader', icon: <><rect x="1" y="1" width="30" height="30" rx="3" fill="#1b6299" /><path d="M1 1h30v14H1z" fill="#4b96c6" /><path d="M6 5v24M26 5v24" stroke="#a2c9e2" strokeWidth="3" strokeDasharray="4 3" /><path d="M11 6l5 4 5-4M11 14l5 4 5-4M11 22l5 4 5-4" stroke="#fff" strokeWidth="3" /></> },
  { name: 'Castle Link', icon: <><rect x="1" y="1" width="30" height="30" fill="#07277c" /><T x={16} y={11} s={8}>castle</T><T x={16} y={24} s={10}>LINK</T><path d="M3 29q5-5 9-3t17-1" stroke="#fff" strokeWidth="1.800" /></> },
  { name: 'WaveForms', icon: <><rect x="1" y="1" width="30" height="30" fill="#1a84fb" /><path d="M5 10l4 12 3.500-12L16 22l3.500-12L23 22l4-12" stroke="#fff" strokeWidth="2.500" /></> },
];

const tray: [string, React.ReactNode][] = [
  ['Show hidden icons', <path d="M2 14l8-8 8 8" stroke="#fff" strokeWidth="1.500" />],
  ['WaveForms', <><rect width="20" height="20" fill="#1a84fb" /><path d="M3 6l2.500 8L8 6l2 8 2-8 2.500 8L17 6" stroke="#fff" strokeWidth="1.800" /></>],
  ['Temperature', <text x="10" y="16" fontSize="16" textAnchor="middle" fill="#59b81c" fontFamily="Roboto, sans-serif">50</text>],
  ['Norton', <><circle cx="9" cy="10" r="8" fill="#fff" stroke="#f7bb15" strokeWidth="3" /><path d="M5 9l4 4 9-11" stroke="#222" strokeWidth="2.500" /><circle cx="15" cy="15" r="5" fill="#2ba14b" /><path d="M12.500 15l2 2 3-4" stroke="#fff" strokeWidth="1.500" /></>],
  ['Battery', <><path d="M6 6h12v9H5v-4" stroke="#fff" strokeWidth="1.300" /><path d="M7.500 8h9v5.500h-9z" fill="#fff" /><path d="M19.500 8v5M1 3v3M5 3v3M0 6h6v2q0 2-3 2t-3-2zM3 10v3" stroke="#fff" /></>],
  ['Wi-Fi', <><path d="M2 17Q3 4 17 3" stroke="#999" strokeWidth="1.300" /><path d="M5.500 18Q6 8 17 7M9.500 18Q10 12 17 11" stroke="#fff" strokeWidth="1.500" /><circle cx="15.500" cy="16.500" r="2" fill="#fff" /></>],
  ['Volume', <path d="M1 7.500h3L8 4v12l-4-3.500H1zM11 8q2 2 0 4M14 5.500q4 4.500 0 9M17 3q6 7 0 14" stroke="#fff" strokeWidth="1.200" />],
];

/* ---------- app ---------- */

export default function App() {
  return (
    <Window>
      <Global />
      <TitleBar>
        <Svg w={20} vb="0 0 32 32"><rect width="32" height="32" fill="#fbe8d5" /><path d="M4 32L32 10v22z" fill="#f6d3b0" /><path d="M10 27V4h14v6h-7v3h6v5h-6v9z" fill="#d9781e" /></Svg>
        <AppTitle>Autodesk Fusion 360 (Education License)</AppTitle>
        <QuickSet $gap={0}>
          <WindowButton aria-label="Minimize"><Svg w={12}><path d="M0 5.500h12" stroke="#fff" /></Svg></WindowButton>
          <WindowButton aria-label="Restore"><Svg w={13}><path d="M.5 2.500h10v10H.5zM2.500 2.500v-2h10v10h-2" stroke="#fff" /></Svg></WindowButton>
          <WindowButton aria-label="Close"><Svg w={12}><path d="M0 0l12 12M12 0L0 12" stroke="#fff" strokeWidth="1.200" /></Svg></WindowButton>
        </QuickSet>
      </TitleBar>

      <TabBar>
        <Tab>
          <Svg w={20} h={22}><path d="M0 3L11-1l9 4v12l-10 5-10-5z" fill="#777" /><path d="M10 6l10-3v12l-10 5z" fill="#555" /><path d="M0 3l10 3v14L0 15z" fill="#999" /></Svg>
          <TabName>Shelf V1 v10</TabName>
          <SyncRing />
          <button aria-label="Close tab"><Svg w={12}><path d="M1 1l10 10M11 1L1 11" stroke="#8a8a8a" strokeWidth="3" /></Svg></button>
        </Tab>
        <NewTab aria-label="New tab"><Svg w={14}><path d="M7 0v14M0 7h14" stroke="#8795a3" strokeWidth="2" /></Svg></NewTab>
      </TabBar>

      <QuickBar>
        <QuickSet $gap={30}>
          <QuickButton aria-label="Data panel"><Svg w={22}><path d="M0 0h6v6H0zM8 0h6v6H8zM16 0h6v6h-6zM0 8h6v6H0zM8 8h6v6H8zM16 8h6v6h-6zM0 16h6v6H0zM8 16h6v6H8zM16 16h6v6h-6z" fill="#505050" /></Svg></QuickButton>
          <QuickButton $loose aria-label="File"><Svg w={17} h={20}><path d="M0 0h10v7h7v13H0zM12 0l5 5h-5z" fill="#505050" /></Svg><Caret /></QuickButton>
          <QuickButton aria-label="Save"><Svg w={20}><path d="M0 0h20v20H2l-2-2z" fill="#979797" /><path d="M4 2h12v7H4zM6 13h9v6H6z" fill="#f4f4f4" /><path d="M7 15h3v3H7z" fill="#979797" /></Svg></QuickButton>
          <QuickSet $gap={18}>
            <QuickButton $loose aria-label="Undo"><Svg w={21} h={16}><path d="M0 6.500L9 0v4c8 0 12 4 11 11-2-4-5-6-11-6v4z" fill="#505050" /></Svg><Caret /></QuickButton>
            <QuickButton $loose aria-label="Redo"><Svg w={21} h={16}><path d="M21 6.500L12 0v4C4 4 0 8 1 15c2-4 5-6 11-6v4z" fill="#505050" /></Svg><Caret /></QuickButton>
          </QuickSet>
        </QuickSet>
        <QuickSet $gap={31}>
          <QuickButton aria-label="Comments"><Svg w={21} h={19}><path d="M0 0h21v14h-3v5l-5-5H0z" fill="#505050" /><path d="M3 4h15M3 7h15M3 10h15" stroke="#f1f1f1" /></Svg></QuickButton>
          <QuickSet $gap={39}>
            <QuickButton aria-label="Job status"><Svg><circle cx="10" cy="10" r="8.700" stroke="#505050" strokeWidth="2.500" /><path d="M10 4v6.500h5" stroke="#505050" strokeWidth="2.500" /></Svg>1</QuickButton>
            <QuickButton>Robert Mitsakov<Caret /></QuickButton>
          </QuickSet>
          <QuickButton aria-label="Help"><Svg><circle cx="10" cy="10" r="10" fill="#666" /><text x="10" y="15.500" fontSize="16" fontWeight="700" textAnchor="middle" fill="#f1f1f1" fontFamily="Liberation Sans, sans-serif">?</text></Svg><Caret /></QuickButton>
        </QuickSet>
      </QuickBar>

      <Viewport>
        <SceneLayer><Scene /></SceneLayer>
        <Overlay>
          <Ribbon>
            <Workspace><Grip />MODEL<Caret /></Workspace>
            {ribbon.map(g => (
              <Group key={g.label} aria-label={g.label}>
                <Tools>
                  {g.icons.map(i => (
                    <Tool key={i} aria-label={i} $on={i === 'select'}>{i === 'select' ? <SelectIcon /> : <ToolIcon name={i} />}</Tool>
                  ))}
                </Tools>
                <GroupLabel>{g.label}<Caret /></GroupLabel>
              </Group>
            ))}
          </Ribbon>

          <BrowserHead>
            <PanelBar>
              <Svg w={13} h={9}><path d="M6 0v9L0 4.500zM13 0v9L7 4.500z" fill="#333" /></Svg>
              <PanelTitle $inset={false}>BROWSER</PanelTitle>
              <button aria-label="Collapse browser"><Svg w={12}><circle cx="6" cy="6" r="6" fill="#333" /><path d="M3 6h6" stroke="#fff" strokeWidth="2" /></Svg></button>
              <MiniGrip />
            </PanelBar>
          </BrowserHead>
          <BrowserBody>
            <ScrollTrack><ScrollThumb /></ScrollTrack>
            <Tree>
              {rows.map(r => (
                <Row key={r.name} $level={r.level}>
                  {r.open !== undefined ? (
                    <Twisty aria-label={`${r.open ? 'Collapse' : 'Expand'} ${r.name}`}>
                      {r.open
                        ? <Svg w={15} h={15}><path d="M14 1v13H1z" fill="#777" stroke="#333" strokeWidth="1.200" /></Svg>
                        : <Svg w={13} h={18}><path d="M2 1l10 8-10 8z" fill="#fff" stroke="#333" strokeWidth="1.300" /></Svg>}
                    </Twisty>
                  ) : <Twisty as="span" />}
                  <Pill $root={r.root}>
                    {r.bulb !== undefined && <button aria-label={`Visibility of ${r.name}`}><Bulb on={r.bulb} /></button>}
                    <Node $root={r.root}>{r.icon}{r.name}</Node>
                    {r.root && <button aria-label="Activate"><Svg w={16}><circle cx="8" cy="8" r="7" stroke="#333" strokeWidth="1.500" /><circle cx="8" cy="8" r="3" fill="#333" /></Svg></button>}
                  </Pill>
                </Row>
              ))}
            </Tree>
          </BrowserBody>

          <BottomRow>
            <PanelBar>
              <PanelTitle $inset>COMMENTS</PanelTitle>
              <button aria-label="Expand comments"><Svg w={12}><circle cx="6" cy="6" r="6" fill="#333" /><path d="M3 6h6M6 3v6" stroke="#fff" strokeWidth="1.800" /></Svg></button>
              <MiniGrip />
            </PanelBar>
            <NavBar>
              <NavSet>{cameraTools.map(n => <NavTool key={n.name} item={n} />)}</NavSet>
              <NavSet $tight>{displayTools.map(n => <NavTool key={n.name} item={n} />)}</NavSet>
            </NavBar>
          </BottomRow>
        </Overlay>
        <CubeLayer><ViewCube /></CubeLayer>
      </Viewport>

      <Timeline>
        <Playback>
          {playback.map(([name, icon]) => <PlayButton key={name} aria-label={name}><Svg w={20} h={24}>{icon}</Svg></PlayButton>)}
        </Playback>
        <TrackArea>
          <TrackScroll />
          <Track>
            <Dashes />
            <Steps>
              {history.map((h, i) => (
                <Step key={i}><StepButton $hot={h === 'Y'} aria-label={stepIcon[h][0]}>{stepIcon[h][1]}</StepButton></Step>
              ))}
            </Steps>
            <Marker><Svg w={16} h={40}><path d="M0 0h16v4L10 12H9v28H7V12H6L0 4z" fill="#666" /></Svg></Marker>
            <SettingsButton aria-label="Timeline settings"><Gear /></SettingsButton>
          </Track>
        </TrackArea>
      </Timeline>

      <Taskbar>
        <SystemButton aria-label="Start"><Svg w={20}><path d="M0 3l8-1.200V9.500H0zM9 1.600L20 0v9.500H9zM0 10.500h8v7.700L0 17zM9 10.500h11V20L9 18.400z" fill="#fff" /></Svg></SystemButton>
        <SystemButton aria-label="Search"><Svg w={22}><circle cx="13.500" cy="8" r="6.500" stroke="#fff" strokeWidth="1.500" /><path d="M9 13l-8 8" stroke="#fff" strokeWidth="1.500" /></Svg></SystemButton>
        <Apps>
          {apps.map(a => <AppButton key={a.name} aria-label={a.name} $state={a.state}><Svg w={31} vb="0 0 32 32">{a.icon}</Svg></AppButton>)}
        </Apps>
        <Tray>
          {tray.map(([name, icon]) => <TrayButton key={name} aria-label={name}><Svg>{icon}</Svg></TrayButton>)}
          <Clock><span>20:04</span><span>14/10/2018</span></Clock>
          <Notify aria-label="Notifications"><Svg w={20} h={22}><path d="M1 2h18v15h-6l-3 3.500L7 17H1z" stroke="#fff" strokeWidth="1.300" /></Svg></Notify>
          <DesktopEdge />
        </Tray>
      </Taskbar>
    </Window>
  );
}
